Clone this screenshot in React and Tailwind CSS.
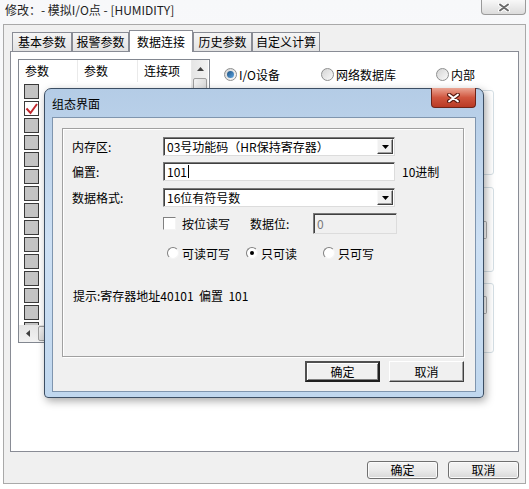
import React from 'react';

const FONT = "font-['Noto_Sans_CJK_SC','Microsoft_YaHei',sans-serif]";

const GlyphX = ({ stroke = '#6b6b6b', outline = '#ffffff', w = 12, h = 9 }) => (
  <svg width={w} height={h} viewBox="0 0 12 9">
    <path d="M2 1.5 L10 7.5 M10 1.5 L2 7.5" stroke={outline} strokeWidth="4" strokeLinecap="round" />
    <path d="M2 1.5 L10 7.5 M10 1.5 L2 7.5" stroke={stroke} strokeWidth="2" strokeLinecap="round" />
  </svg>
);

const Tab = ({ label, width, active }) =>
  active ? (
    <div
      className="h-[22px] bg-white border border-b-0 border-[#898c95] flex items-start justify-center pt-[2px] text-[12px] text-black"
      style={{ width }}
    >
      {label}
    </div>
  ) : (
    <div
      className="h-[19px] mb-[1px] border border-b-0 border-[#898c95] bg-gradient-to-b from-[#f5f5f5] to-[#e3e3e3] flex items-center justify-center text-[12px] text-black"
      style={{ width }}
    >
      {label}
    </div>
  );

const AeroRadio = ({ checked, label }) => (
  <div className="flex items-center gap-[2px] text-[12px]">
    <div className="w-[13px] h-[13px] rounded-full border border-[#8e8f8f] bg-gradient-to-br from-[#d4d4d4] to-[#fafafa] flex items-center justify-center">
      {checked && <div className="w-[7px] h-[7px] rounded-full bg-gradient-to-br from-[#1c5180] to-[#5fa7e5]" />}
    </div>
    <span className="leading-[15px]">{label}</span>
  </div>
);

const ListCheck = ({ checked }) => (
  <div
    className={`w-[15px] h-[15px] border border-[#3a3a3a] flex items-center justify-center ${
      checked ? 'bg-white' : 'bg-[#c4c4c4]'
    }`}
  >
    {checked && (
      <svg width="13" height="13" viewBox="0 0 13 13">
        <path d="M1.5 6.5 L5.5 11 L12 2" fill="none" stroke="#c1272d" strokeWidth="2" />
      </svg>
    )}
  </div>
);

const ClassicRadio = ({ checked, label }) => (
  <div className="flex items-center gap-[3px] text-[12px]">
    <div className="w-[12px] h-[12px] rounded-full bg-white border border-t-[#808080] border-l-[#808080] border-r-[#f4f4f4] border-b-[#f4f4f4] flex items-center justify-center">
      {checked && <div className="w-[4px] h-[4px] rounded-full bg-black" />}
    </div>
    <span className="leading-[15px]">{label}</span>
  </div>
);

const Select = ({ value }) => (
  <div className="w-[232px] h-[19px] bg-white flex items-center border border-t-[#7a7a7a] border-l-[#7a7a7a] border-r-[#dcdcdc] border-b-[#dcdcdc] shadow-[inset_1px_1px_0_#404040]">
    <span className="flex-1 pl-[3px] text-[12px] leading-[15px] whitespace-nowrap">{value}</span>
    <div className="w-[16px] h-[15px] mr-px bg-[#f0f0f0] border border-t-[#f8f8f8] border-l-[#f8f8f8] border-r-[#404040] border-b-[#404040] shadow-[inset_-1px_-1px_0_#a0a0a0] flex items-center justify-center">
      <svg width="7" height="4" viewBox="0 0 7 4">
        <path d="M0 0 H7 L3.5 4 Z" fill="#000" />
      </svg>
    </div>
  </div>
);

const ClassicButton = ({ label, primary }) => (
  <div
    className={`w-[75px] h-[21px] flex items-center justify-center text-[12px] bg-[#f0f0f0] ${
      primary
        ? 'border-2 border-t-[#505050] border-l-[#505050] border-r-[#202020] border-b-[#202020] shadow-[inset_1px_1px_0_#ffffff,inset_-1px_-1px_0_#808080]'
        : 'border border-t-white border-l-white border-r-[#404040] border-b-[#404040] shadow-[inset_-1px_-1px_0_#a0a0a0]'
    }`}
  >
    {label}
  </div>
);

const AeroButton = ({ label }) => (
  <div className="w-[71px] h-[18px] rounded-[3px] border border-[#707070] bg-gradient-to-b from-[#f4f4f4] via-[#ebebeb] to-[#d8d8d8] shadow-[inset_0_0_0_1px_#fbfbfb] flex items-center justify-center text-[12px]">
    {label}
  </div>
);

const rows = Array.from({ length: 15 }, (_, i) => i);

export default function App() {
  return (
    <div className={`relative w-[529px] h-[489px] overflow-hidden bg-gradient-to-b from-[#f7f8fa] to-[#ffffff] text-black ${FONT}`}>
      {/* window title */}
      <div className="h-[24px] flex items-start justify-between">
        <div className="pl-[5px] pt-[2px] text-[12px] leading-[16px] text-[#1e1e1e]">修改：- 模拟I/O点 - [HUMIDITY]</div>
        <div className="mr-[3px] w-[45px] h-[15px] rounded-b-[4px] border border-t-0 border-[#9a9a9a] bg-gradient-to-b from-[#f8f8f8] to-[#dcdcdc] flex items-center justify-center">
          <GlyphX />
        </div>
      </div>

      {/* client area */}
      <div className="mx-[3px] h-[460px] border border-[#a9a9a9] bg-[#f0f0f0] pl-[6px] pr-[6px] pt-[5px] flex flex-col">
        <div className="relative z-10 -mb-px h-[22px] pl-[2px] flex items-end">
          <Tab label="基本参数" width={60} />
          <Tab label="报警参数" width={57} />
          <Tab label="数据连接" width={64} active />
          <Tab label="历史参数" width={59} />
          <Tab label="自定义计算" width={68} />
        </div>

        <div className="h-[401px] border border-[#898c95] bg-white flex pt-[7px] pl-[7px]">
          {/* list box */}
          <div className="w-[192px] h-[284px] border border-[#828790] bg-white flex flex-col">
            <div className="flex-1 flex min-h-0">
              <div className="w-[172px] flex flex-col overflow-hidden">
                <div className="h-[22px] flex items-center text-[12px] shrink-0">
                  <div className="w-[59px] pl-[6px] border-r border-[#eaeaea] h-full flex items-center">参数</div>
                  <div className="w-[60px] pl-[6px] border-r border-[#eaeaea] h-full flex items-center">参数</div>
                  <div className="pl-[6px]">连接项</div>
                </div>
                <div className="flex flex-col pt-px">
                  {rows.map((i) => (
                    <div key={i} className="h-[17px] shrink-0 flex items-center pl-[5px]">
                      <ListCheck checked={i === 1} />
                    </div>
                  ))}
                </div>
              </div>
              <div className="w-[17px] bg-gradient-to-r from-[#e5e5e5] to-[#f2f2f2] flex flex-col border-l border-[#e8e8e8]">
                <div className="h-[17px] flex items-center justify-center">
                  <svg width="7" height="4" viewBox="0 0 7 4">
                    <path d="M0 4 L3.5 0 L7 4 Z" fill="#404040" />
                  </svg>
                </div>
                <div className="mx-[1px] mt-[1px] h-[40px] rounded-[2px] border border-[#9d9d9d] bg-gradient-to-r from-[#f2f2f2] to-[#dcdcdc]" />
              </div>
            </div>
            <div className="h-[17px] flex bg-gradient-to-b from-[#e5e5e5] to-[#f2f2f2]">
              <div className="w-[17px] flex items-center justify-center">
                <svg width="4" height="7" viewBox="0 0 4 7">
                  <path d="M4 0 L0 3.5 L4 7 Z" fill="#404040" />
                </svg>
              </div>
              <div className="my-[1px] ml-[2px] w-[60px] rounded-[2px] border border-[#9d9d9d] bg-gradient-to-b from-[#f2f2f2] to-[#dcdcdc]" />
            </div>
          </div>

          {/* right side */}
          <div className="ml-[8px] flex flex-col">
            <div className="mt-[8px] h-[14px] pl-[6px] flex items-center">
              <div className="w-[97px]">
                <AeroRadio checked label="I/O设备" />
              </div>
              <div className="w-[115px]">
                <AeroRadio label="网络数据库" />
              </div>
              <AeroRadio label="内部" />
            </div>
            <div className="mt-[9px] w-[276px] h-[85px] rounded-[3px] border border-[#d5dfe5]" />
            <div className="mt-[12px] w-[276px] h-[85px] rounded-[3px] border border-[#d5dfe5] flex items-center justify-end pr-[6px]">
              <div className="w-[4px] h-[18px] rounded-r-[2px] border border-l-0 border-[#b0b0b0]" />
            </div>
            <div className="mt-[11px] w-[276px] h-[70px] rounded-[3px] border border-[#d5dfe5] flex items-start justify-end pr-[6px] pt-[12px]">
              <div className="w-[4px] h-[18px] rounded-r-[2px] border border-l-0 border-[#b0b0b0]" />
            </div>
          </div>
        </div>

        <div className="mt-[9px] flex justify-end gap-[10px]">
          <AeroButton label="确定" />
          <AeroButton label="取消" />
        </div>
      </div>

      {/* modal dialog */}
      <div className="absolute left-[44px] top-[88px] w-[440px] h-[310px] rounded-t-[7px] rounded-b-[4px] border border-[#3c4e63] bg-gradient-to-b from-[#b4cce6] via-[#cde0f4] to-[#c0d7ee] px-[7px] pb-[5px] flex flex-col shadow-[2px_3px_8px_rgba(0,0,0,0.35)]">
        <div className="h-[28px] flex items-start justify-between">
          <div className="pt-[7px] text-[12px] leading-[16px] text-black">组态界面</div>
          <div className="-mt-px w-[45px] h-[20px] rounded-b-[4px] border border-t-0 border-[#6e2418] bg-gradient-to-b from-[#e9a493] via-[#d0563f] to-[#b93a24] flex items-center justify-center">
            <GlyphX stroke="#ffffff" outline="#5a1a10" w={13} h={10} />
          </div>
        </div>

        <div className="flex-1 border border-[#7f95ae] bg-[#f0f0f0] flex flex-col pl-[9px] pt-[10px]">
          <div className="w-[402px] h-[229px] border border-[#a0a0a0] shadow-[inset_1px_1px_0_#ffffff,1px_1px_0_#ffffff] flex flex-col pl-[9px] text-[12px]">
            <div className="mt-[8px] h-[19px] flex items-center">
              <div className="w-[91px]">内存区:</div>
              <Select value="03号功能码（HR保持寄存器）" />
            </div>
            <div className="mt-[6px] h-[19px] flex items-center">
              <div className="w-[91px]">偏置:</div>
              <div className="w-[232px] h-[19px] bg-white flex items-center border border-t-[#7a7a7a] border-l-[#7a7a7a] border-r-[#dcdcdc] border-b-[#dcdcdc] shadow-[inset_1px_1px_0_#404040] pl-[3px]">
                <span className="leading-[15px]">101</span>
                <span className="ml-px w-px h-[13px] bg-black" />
              </div>
              <div className="ml-[7px]">10进制</div>
            </div>
            <div className="mt-[7px] h-[19px] flex items-center">
              <div className="w-[91px]">数据格式:</div>
              <Select value="16位有符号数" />
            </div>
            <div className="mt-[6px] h-[21px] flex items-center pl-[91px]">
              <div className="w-[13px] h-[13px] bg-white border border-t-[#808080] border-l-[#808080] border-r-[#f4f4f4] border-b-[#f4f4f4]" />
              <div className="ml-[6px] w-[68px]">按位读写</div>
              <div className="w-[63px]">数据位:</div>
              <div className="w-[84px] h-[21px] bg-[#f0f0f0] border border-t-[#7a7a7a] border-l-[#7a7a7a] border-r-[#dcdcdc] border-b-[#dcdcdc] shadow-[inset_1px_1px_0_#404040] pl-[3px] flex items-center text-[#7a7a7a]">
                0
              </div>
            </div>
            <div className="mt-[12px] h-[14px] flex items-center pl-[95px]">
              <div className="w-[79px]">
                <ClassicRadio label="可读可写" />
              </div>
              <div className="w-[77px]">
                <ClassicRadio checked label="只可读" />
              </div>
              <ClassicRadio label="只可写" />
            </div>
            <div className="mt-[29px] h-[14px] flex items-center pl-px">提示:寄存器地址40101&nbsp;&nbsp;偏置&nbsp;&nbsp;101</div>
          </div>
          <div className="mt-[4px] w-[402px] flex justify-end gap-[9px]">
            <ClassicButton label="确定" primary />
            <ClassicButton label="取消" />
          </div>
        </div>
      </div>
    </div>
  );
}
